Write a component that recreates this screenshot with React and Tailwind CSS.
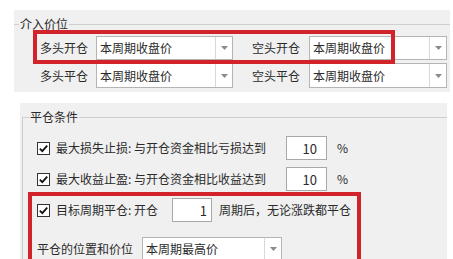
import React from "react";

const FONT = { fontFamily: '"Noto Sans CJK SC", "Noto Sans", sans-serif' };

function Arrow() {
  return (
    <svg width="7" height="4" viewBox="0 0 7 4">
      <path d="M0 0 H7 L3.5 4 Z" fill="#8a8a8a" />
    </svg>
  );
}

function Select({ value, w }) {
  return (
    <div className={`flex h-full bg-white border border-[#b4b4b4] ${w}`}>
      <div className="flex-1 flex items-center pl-[3px] leading-none whitespace-nowrap overflow-hidden">
        {value}
      </div>
      <div className="w-[17px] border-l border-[#d9d9d9] flex items-center justify-center">
        <Arrow />
      </div>
    </div>
  );
}

function Check() {
  return (
    <svg width="13" height="13" viewBox="0 0 13 13" className="shrink-0">
      <rect x="0.5" y="0.5" width="12" height="12" fill="#fff" stroke="#333" />
      <path d="M2.8 6.6 L5.3 9.1 L10.2 3.6" fill="none" stroke="#111" strokeWidth="1.8" />
    </svg>
  );
}

function NumBox({ value, w, pr }) {
  return (
    <div
      className={`h-full bg-white border border-[#a8a8a8] flex items-center justify-end text-[13px] leading-none ${w} ${pr}`}
    >
      {value}
    </div>
  );
}

export default function App() {
  return (
    <div
      className="relative w-[453px] h-[259px] overflow-hidden bg-white text-[12px] text-[#2a2a2a]"
      style={FONT}
    >
      {/* 介入价位 */}
      <div className="ml-[14px] mt-[10px] w-[436px] h-[82px] bg-[#f0f0f0] pt-[6px]">
        <fieldset className="border-t border-[#cfcfcf]">
          <legend className="ml-[5px] px-[1px] leading-[16px]">介入价位</legend>
          <div className="mt-[4px] flex flex-col gap-[3px]">
            <div className="flex items-center h-[24px] pl-[26px]">
              <span className="w-[56px]">多头开仓</span>
              <Select value="本周期收盘价" w="w-[137px]" />
              <span className="w-[76px] pl-[19px]">空头开仓</span>
              <Select value="本周期收盘价" w="w-[138px]" />
            </div>
            <div className="flex items-center h-[25px] pl-[26px]">
              <span className="w-[56px]">多头平仓</span>
              <Select value="本周期收盘价" w="w-[137px]" />
              <span className="w-[76px] pl-[19px]">空头平仓</span>
              <Select value="本周期收盘价" w="w-[138px]" />
            </div>
          </div>
        </fieldset>
      </div>

      {/* 平仓条件 */}
      <div className="ml-[20px] mt-[11px] w-[427px] h-[160px] bg-[#f0f0f0] pt-[6px]">
        <fieldset className="ml-[2px] h-full border-t border-l border-[#cfcfcf] pl-[14px]">
          <legend className="ml-[-8px] px-[1px] leading-[16px]">平仓条件</legend>
          <div className="mt-[11px] flex flex-col">
            <div className="flex items-center h-[24px]">
              <Check />
              <span className="ml-[6px] w-[230px] whitespace-nowrap">最大损失止损: 与开仓资金相比亏损达到</span>
              <NumBox value="10" w="w-[41px]" pr="pr-[9px]" />
              <span className="ml-[10px]">%</span>
            </div>
            <div className="flex items-center h-[24px] mt-[7px]">
              <Check />
              <span className="ml-[6px] w-[230px] whitespace-nowrap">最大收益止盈: 与开仓资金相比收益达到</span>
              <NumBox value="10" w="w-[41px]" pr="pr-[9px]" />
              <span className="ml-[10px]">%</span>
            </div>
            <div className="flex items-center h-[24px] mt-[7px]">
              <Check />
              <span className="ml-[6px] w-[116px] whitespace-nowrap">目标周期平仓: 开仓</span>
              <NumBox value="1" w="w-[40px]" pr="pr-[4px]" />
              <span className="ml-[7px] whitespace-nowrap">周期后，无论涨跌都平仓</span>
            </div>
            <div className="flex items-center h-[24px] mt-[15px]">
              <span className="w-[105px] whitespace-nowrap">平仓的位置和价位</span>
              <Select value="本周期最高价" w="w-[140px]" />
            </div>
          </div>
        </fieldset>
      </div>

      {/* red annotation boxes */}
      <div className="absolute left-[33px] top-[30px] w-[362px] h-[34px] border-4 border-[#d2232b]" />
      <div className="absolute left-[28px] top-[192px] w-[333px] h-[80px] border-4 border-[#d2232b]" />
    </div>
  );
}
